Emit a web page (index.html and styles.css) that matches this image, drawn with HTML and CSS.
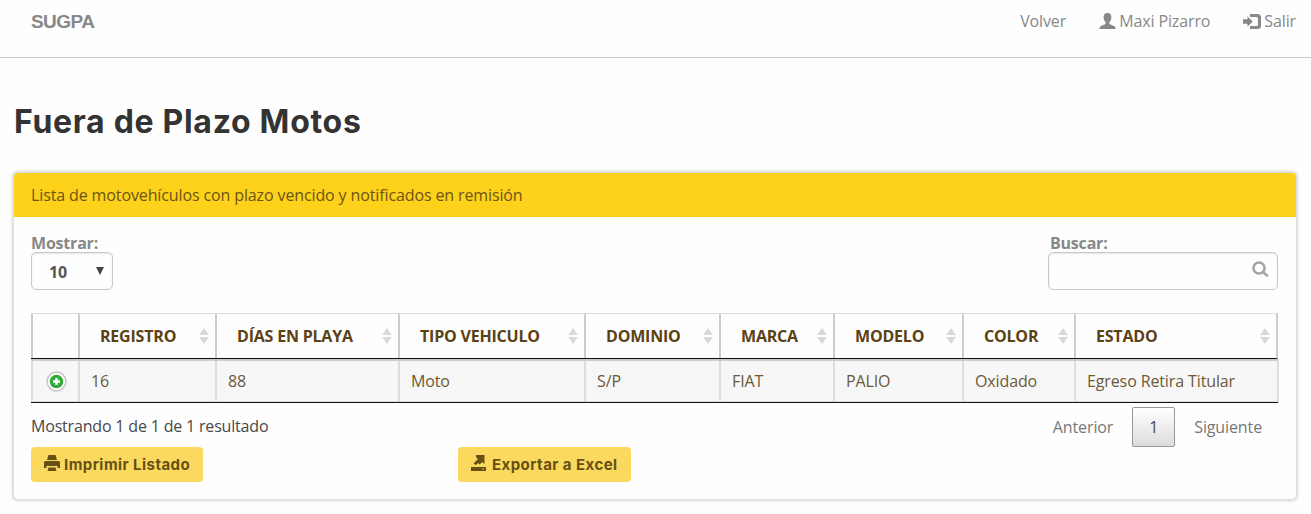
FILE: index.html
```
<!DOCTYPE html>
<html lang="es">
<head>
<meta charset="utf-8">
<title>SUGPA</title>
<link rel="stylesheet" href="styles.css">
</head>
<body>
<header class="navbar">
  <a class="brand">SUGPA</a>
  <nav class="nav-links">
    <a class="nav-back"><span class="volver">Volver</span></a>
    <a class="nav-user"><svg class="icon-user" width="17" height="17" viewBox="0 0 17 17"><path d="M8.5 0C5.9 0 4.5 1.6 4.6 4.2c.1 2.2.8 4 2 5v1.5c-.2.8-5.1 2-5.6 3.1-.4.7-.5 1.3-.5 2.2h16c0-.9-.1-1.5-.5-2.2-.5-1.1-5.4-2.3-5.6-3.1V9.200c1.200-1 1.900-2.800 2-5C12.500 1.600 11.100 0 8.500 0z"/></svg><span class="user">Maxi Pizarro</span></a>
    <a class="nav-exit"><svg class="icon-exit" width="18" height="15" viewBox="0 0 18 15"><path d="M0 5.200h4.500V2.300l5.200 5.200-5.200 5.200V9.800H0zM7 0h7.500Q18 0 18 3.500v8Q18 15 14.500 15H7v-3h6.500q1.500 0 1.500-1.500v-6Q15 3 13.500 3H7z"/></svg><span class="salir">Salir</span></a>
  </nav>
</header>
<main class="content">
  <h1 class="title"><span>Fuera de Plazo Motos</span></h1>
  <section class="panel">
    <div class="panel-heading"><span>Lista de motovehículos con plazo vencido y notificados en remisión</span></div>
    <div class="panel-body">
      <div class="controls">
        <div class="length">
          <div class="label">Mostrar:</div>
          <div class="select"><span>10</span><svg width="8" height="8" viewBox="0 0 8 8"><path d="M0 0h8L4 8z"/></svg></div>
        </div>
        <div class="filter">
          <div class="label filter-label">Buscar:</div>
          <div class="search"><svg width="17" height="17" viewBox="0 0 17 17"><circle cx="7" cy="7" r="5.600"/><path d="M11 11l4.800 4.300"/></svg></div>
        </div>
      </div>
      <div class="grid head">
        <div></div>
        <div><span>REGISTRO</span><i></i></div>
        <div><span>DÍAS EN PLAYA</span><i></i></div>
        <div><span>TIPO VEHICULO</span><i></i></div>
        <div><span>DOMINIO</span><i></i></div>
        <div><span>MARCA</span><i></i></div>
        <div><span>MODELO</span><i></i></div>
        <div><span>COLOR</span><i></i></div>
        <div><span>ESTADO</span><i></i></div>
      </div>
      <div class="grid row">
        <div class="expand"><svg width="21" height="21" viewBox="0 0 21 21"><circle cx="10.500" cy="10.500" r="9.400" fill="#fff" stroke="#c6c6c6" stroke-width="1.500"/><circle cx="10.500" cy="10.500" r="6.800" fill="#32ab3c"/><path d="M7 10.500h7M10.500 7v7" stroke="#fff" stroke-width="2.400"/></svg></div>
        <div>16</div><div>88</div><div>Moto</div><div>S/P</div><div>FIAT</div><div>PALIO</div><div>Oxidado</div><div>Egreso Retira Titular</div>
      </div>
      <div class="summary">
        <span class="info">Mostrando 1 de 1 de 1 resultado</span>
        <div class="pager"><span>Anterior</span><span class="page">1</span><span>Siguiente</span></div>
      </div>
      <div class="actions">
        <button class="btn"><svg width="16" height="16" viewBox="0 0 16 16"><path d="M4.500 0h7L13 5H3zM1.500 6h13Q16 6 16 7.500V13h-2.500v-2h-11v2H0V7.500Q0 6 1.500 6zM4.500 12.500h7l1 3.500h-9z"/></svg><span class="print">Imprimir Listado</span></button>
        <button class="btn btn-export"><svg width="15" height="16" viewBox="0 0 15 16"><path d="M5 0H13.500v9l-2.200-1.800L8.500 9.500 7.200 8 5 10 2.500 8.500 5.500 5.500 7 4.500 5 2zM0 12h15v4H0z"/><path class="slot" d="M11.500 13.500h1.500v1h-1.500z"/></svg><span class="export">Exportar a Excel</span></button>
      </div>
    </div>
  </section>
</main>
</body>
</html>
```
FILE: styles.css
```
* { box-sizing: border-box; }
body { margin: 0; height: 514px; overflow: hidden; background: #fefefe; color: #484848; font: 400 16px/22px "Open Sans", sans-serif; letter-spacing: -.12px; }
span { white-space: nowrap; }
svg { flex: none; }
.navbar { height: 58px; border-bottom: 1px solid #c8c8c8; padding: 10px 15px 0 31px; display: flex; justify-content: space-between; align-items: flex-start; fill: #888; }
.brand { font: bold 19px/23px "Liberation Sans", sans-serif; color: #888; letter-spacing: -.55px; }
.nav-links { display: flex; color: #888; }
.nav-links a { display: flex; align-items: center; height: 22px; }
.nav-user { margin-left: 33px; gap: 3px; }
.nav-exit { margin-left: 33px; gap: 3px; }
.content { padding: 41px 14px 0; }
.title { margin: 0 0 28px; height: 45px; font: 700 32px/45px Inter, sans-serif; letter-spacing: .7px; color: #333; }
.panel { height: 328px; width: 1284px; border: 1px solid #ddd; border-radius: 5px; box-shadow: 0 0 3px 1px rgba(0,0,0,.16); margin-left: -1px; background: #fefefe; overflow: hidden; }
.panel-heading { height: 44px; background: #fed11b; color: #6c5515; padding: 11px 17px; }
.panel-body { padding: 16px 17px 0; }
.controls { display: flex; justify-content: space-between; height: 80px; padding-right: 1px; }
.label { font-weight: 700; color: #888; height: 19px; line-height: 20px; letter-spacing: -.2px; }
.filter-label { padding-left: 2px; }
.select, .search { display: flex; align-items: center; height: 38px; border: 1px solid #c8c8c8; border-radius: 5px; box-shadow: inset 0 1px 2px rgba(0,0,0,.1); }
.select { width: 82px; padding: 2px 8px 0 17px; justify-content: space-between; font-weight: 700; color: #555; fill: #444; }
.select svg { margin-bottom: 2px; }
.search { width: 230px; justify-content: flex-end; padding: 0 8px 4px; }
.search svg { fill: none; stroke: #a4a4a4; stroke-width: 2.500; }
.grid { display: grid; grid-template-columns: 47px 137px 183px 186px 135px 114px 129px 112px 1fr; width: 1248px; color: #6b5936; }
.grid > div { border-left: 2px solid #ddd; display: flex; align-items: center; }
.head { height: 46px; width: 1247px; border: 1px solid #ddd; border-right: 2px solid #ccc; border-left: 0; border-bottom: 1px solid #111; font-weight: 700; color: #5a4214; letter-spacing: -.2px; }
.head > div { border-left-color: #ccc; padding: 0 6px 0 20px; justify-content: space-between; }
.head i { width: 10px; height: 16px; display: flex; flex-direction: column; gap: 2px; }
.head i::before, .head i::after { content: ""; flex: 1; background: #d9d9d9; clip-path: polygon(50% 0, 100% 100%, 0 100%); }
.head i::after { clip-path: polygon(0 0, 100% 0, 50% 100%); }
.row { height: 44px; border-top: 2px solid #ccc; border-right: 2px solid #ddd; border-bottom: 1px solid #111; background: #f7f7f7; }
.row > div { padding: 0 11px; border-bottom: 1px solid #ddd; white-space: nowrap; }
.row .expand { padding: 0 0 0 13px; }
.summary { height: 44px; display: flex; justify-content: space-between; padding-top: 4px; }
.info { padding-top: 8px; letter-spacing: -.18px; }
.pager { display: flex; gap: 19px; padding-right: 17px; line-height: 40px; color: #777; }
.page { width: 43px; height: 40px; border: 1px solid #979797; border-radius: 2px; background: linear-gradient(#fff, #dcdcdc); text-align: center; line-height: 39px; color: #444; }
.actions { display: grid; grid-template-columns: 172px 173px; gap: 255px; }
.btn { display: flex; align-items: center; gap: 4px; height: 35px; border: 0; border-radius: 4px; background: #fbd95e; padding: 0 13px; color: #665014; fill: #665014; font: 700 15px/20px Inter, sans-serif; letter-spacing: .45px; }
.btn-export { gap: 6px; }
.btn svg { margin-bottom: 3px; }
.slot { fill: #fbd95e; }
```
